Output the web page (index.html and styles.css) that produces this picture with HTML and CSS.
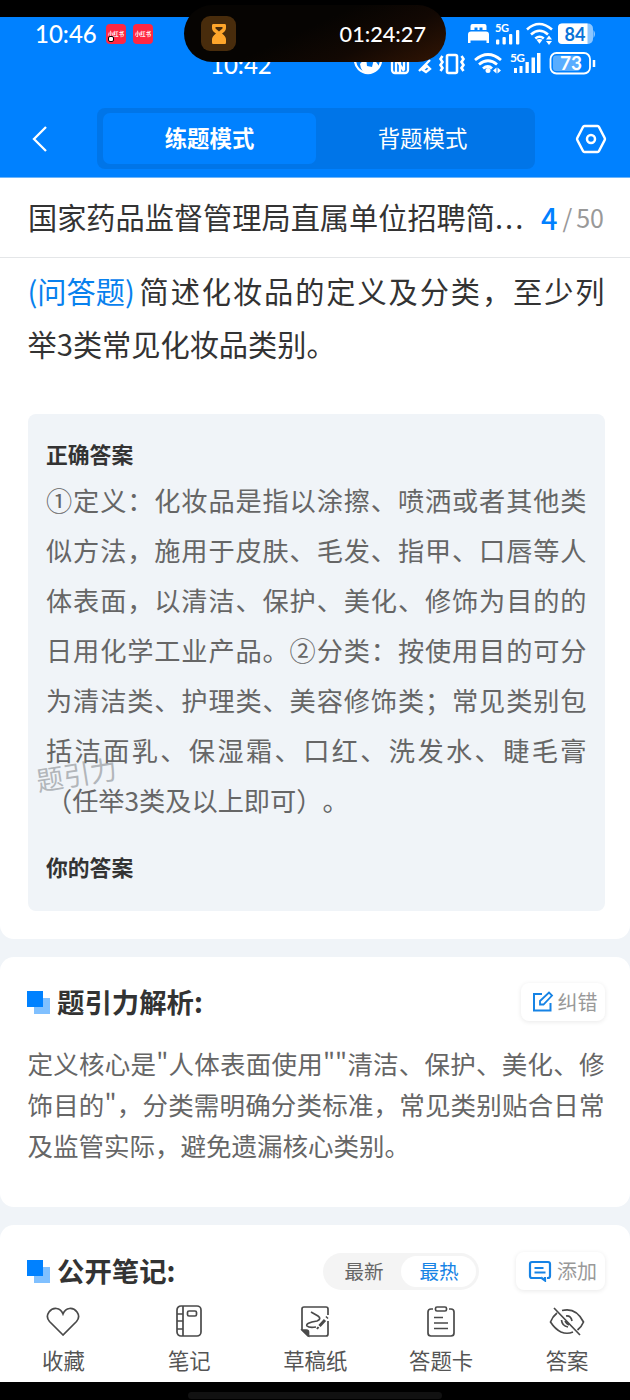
FILE: index.html
```html
<!DOCTYPE html>
<html lang="zh-CN">
<head>
<meta charset="utf-8">
<title>练题模式</title>
<link rel="stylesheet" href="styles.css">
</head>
<body>
<div class="screen">
  <div class="bezel"></div>
  <header class="header">
    <div class="status">
      <span class="clock">10:46</span>
      <span class="app app-first">小红书</span>
      <span class="app">小红书</span>
      <svg class="status-icons" width="130" height="26" viewBox="0 0 130 26" fill="#fff">
        <path d="M3.500 9V5q0-2 2-2h12q2 0 2 2v4h-4V6.500h-3V9h-2V6.500h-3V9zM1 22v-8.500q0-3 3-3h15q3 0 3 3V22h-2.500v-2.500h-16V22z"/>
        <rect x="29" y="18.500" width="3.300" height="5" rx="1"/><rect x="35.500" y="16" width="3.300" height="7.500" rx="1"/><rect x="42" y="13" width="3.300" height="10.500" rx="1"/><rect x="49" y="9" width="3.300" height="14.500" rx="1"/>
        <g fill="none" stroke="#fff" stroke-width="2.600"><path d="M60 8.500q12-11 25 0M64 13.500q8.500-7.500 17 0M68.300 17.500q4.300-3.500 8.500 0"/></g>
        <path d="M69.500 18.800q3-1.800 6 0l-3 4zM79 18.500l3-4 3 4zm0 1.500 3 4 3-4z"/>
        <rect x="91" y="2.500" width="35" height="20.500" rx="5" opacity=".55"/><path d="M95 2.500h25.500V23H95q-4 0-4-4V6.500q0-4 4-4z"/><path d="M126.500 9q3 4 0 8z" opacity=".6"/>
      </svg>
      <span class="sig">5G</span><span class="battery">84</span>
    </div>
    <div class="status-second">
      <span class="clock-second">10:42</span>
      <svg class="second-icons" width="244" height="26" viewBox="0 0 244 26" fill="none" stroke="#fff" stroke-width="2.300">
        <circle cx="14" cy="9" r="13"/><path d="M6 13l6-7 1 9 5 1 2-8 5 7q-4 7-11 7t-8-9z" fill="#fff" stroke="none"/>
        <rect x="38" y="4" width="16" height="18" rx="3"/><path d="M42 7v15M50 5v14M42 8l8 12M46 5v17"/>
        <path d="M65 20l11-11M72 21l4-3-3-3-4 4z"/>
        <rect x="93" y="4" width="10" height="18" rx="1.500" stroke-width="2.600"/><path d="M88.500 5l-2 3 2 3-2 3 2 3-2 3M107.500 5l2 3-2 3 2 3-2 3 2 3" stroke-width="2.600"/>
        <path d="M121 9q13-11 26 0M125 13.500q9-7.500 18 0M129 17.500q5-4 9 0" stroke-width="2.800"/><circle cx="134" cy="19.500" r="2.500" fill="#fff" stroke="none"/><path d="M139 19.500l3.500-3v6zM147 19.500l-3.500-3v6z" fill="#fff" stroke="none"/>
        <g fill="#fff" stroke="none"><rect x="160" y="17" width="3" height="5"/><rect x="165.500" y="15" width="3" height="7"/><rect x="171.500" y="11" width="3.300" height="11"/><rect x="177.500" y="6.500" width="3.500" height="15.500"/><rect x="183" y="2" width="3.500" height="20"/></g>
        <rect x="196.500" y="2" width="39.500" height="20.500" rx="6" stroke-width="1.800"/><rect x="199" y="4.500" width="27" height="15.500" rx="3" fill="#fff" stroke="none" opacity=".35"/><path d="M240 9v7" stroke-width="2.500"/>
      </svg>
      <span class="sig-second">5G</span><span class="battery-second">73</span>
    </div>
    <div class="island">
      <span class="timer-icon"><svg width="14" height="20" viewBox="0 0 14 20"><path d="M1 0h12q1 0 1 1.500V4q0 3-4 5.500 4 3 4 6v3q0 1.500-1 1.500H1q-1 0-1-1.500v-3q0-3 4-6Q0 7 0 4V1.500Q0 0 1 0z" fill="#ffa62b"/><path d="M3.500 3h7v1.500L7 7.500l-3.500-3z" fill="#482c0c"/></svg></span>
      <span>01:24:27</span>
    </div>
    <div class="nav">
      <svg class="back" width="18" height="28" viewBox="0 0 18 28"><path d="M15 2 3 14l12 12" fill="none" stroke="#fff" stroke-width="2.300"/></svg>
      <div class="tabs"><span class="tab active">练题模式</span><span class="tab">背题模式</span></div>
      <svg class="gear" width="32" height="30" viewBox="0 0 32 30" fill="none" stroke="#fff" stroke-width="2.500" stroke-linejoin="round"><path d="M9.500 2h13q1 0 1.500 1l5.700 11q.5 1 0 2L24 27q-.5 1-1.500 1h-13q-1 0-1.500-1L2.300 16q-.5-1 0-2L8 3q.5-1 1.500-1z"/><circle cx="16" cy="15" r="4"/></svg>
    </div>
  </header>

  <section class="title-row">
    <h1 class="title">国家药品监督管理局直属单位招聘简<span class="dots">...</span></h1>
    <span class="count"><b class="now">4</b><span class="slash">/</span>50</span>
  </section>

  <main class="question">
    <div class="question-line"><span class="kind">(问答题)</span><span class="fill">简述化妆品的定义及分类，至少列</span></div>
    <div class="question-line">举3类常见化妆品类别。</div>
    <div class="answer">
      <h2 class="answer-title">正确答案</h2>
      <div class="answer-text">
        <p class="full">①定义：化妆品是指以涂擦、喷洒或者其他类</p>
        <p class="full">似方法，施用于皮肤、毛发、指甲、口唇等人</p>
        <p class="full">体表面，以清洁、保护、美化、修饰为目的的</p>
        <p class="full">日用化学工业产品。②分类：按使用目的可分</p>
        <p class="full">为清洁类、护理类、美容修饰类；常见类别包</p>
        <p class="full">括洁面乳、保湿霜、口红、洗发水、睫毛膏</p>
        <p>（任举3类及以上即可）。</p>
      </div>
      <h2 class="answer-title yours">你的答案</h2>
      <span class="watermark">题引力</span>
    </div>
  </main>

  <section class="card analysis">
    <div class="card-head">
      <i class="mark"></i><h2 class="card-title">题引力解析:</h2>
      <span class="button fix"><svg width="22" height="22" viewBox="0 0 22 22" fill="none" stroke="#1683e5" stroke-width="2"><path d="M10 3H2v16.500h16.500V12"/><path d="M8 13.500V10l9-8.500 3 3-8.500 9z" stroke-width="1.800"/></svg>纠错</span>
    </div>
    <div class="analysis-text">
      <p class="full">定义核心是"人体表面使用""清洁、保护、美化、修</p>
      <p class="full">饰目的"，分类需明确分类标准，常见类别贴合日常</p>
      <p>及监管实际，避免遗漏核心类别。</p>
    </div>
  </section>

  <section class="card notes">
    <div class="card-head">
      <i class="mark"></i><h2 class="card-title">公开笔记:</h2>
      <div class="sort"><span class="sort-item">最新</span><span class="sort-item chosen">最热</span></div>
      <span class="button add"><svg width="24" height="22" viewBox="0 0 24 22" fill="none" stroke="#1683e5" stroke-width="2.200"><path d="M13 18H4q-2 0-2-2V4q0-2 2-2h16q2 0 2 2v12q0 2-2 2h-1M13 17.500l4 3V17"/><path d="M6.500 8h9M6.500 12.500h11"/></svg>添加</span>
    </div>
    <nav class="toolbar">
      <div class="tool"><svg width="36" height="36" viewBox="0 0 36 36"><path d="M18 31 4.500 17.500Q.5 13 4 8q3-4 7.500-3.500Q16 5 18 10q2-5 6.500-5.500Q29 4 32 8q3.500 5-.5 9.500z"/></svg>收藏</div>
      <div class="tool"><svg width="36" height="36" viewBox="0 0 36 36"><rect x="6" y="2" width="24" height="30" rx="4"/><path d="M12 2V32M6 10h6M6 17h6M6 25h6"/><rect x="16.500" y="7" width="9" height="5" rx="1.500"/></svg>笔记</div>
      <div class="tool"><svg width="36" height="36" viewBox="0 0 36 36"><path d="M31 11V5q0-2-2-2H7Q5 3 5 5v21l6 6h18q2 0 2-2V17"/><path d="M5.500 26h4q2 0 2 2v3.500z" fill="#4a4a4a"/><path d="M14 8l7 4q4 3-1 5-12 2-10 5 2 2 9 1"/><path d="M20 25l1.500-2" stroke-width="2"/><path d="M22.500 22l5.500-6M29.500 14l1-1" stroke-width="3"/></svg>草稿纸</div>
      <div class="tool"><svg width="36" height="36" viewBox="0 0 36 36"><path d="M10 5H8Q5 5 5 8v21q0 3 3 3h20q3 0 3-3V8q0-3-3-3h-2"/><rect x="12.500" y="3" width="11" height="4" rx="1.500"/><path d="M11 13.500h9M11 19h14M11 24.500h14"/></svg>答题卡</div>
      <div class="tool"><svg width="36" height="36" viewBox="0 0 36 36"><path d="M8 9Q3.500 12.500 1.500 18 6 25 12 28 18 30.500 24 28M13 6.500Q27 3 34.500 18q-2 5-6 8M5 4 31 31M17 12q5-.5 6 5M12.500 16q.5 6 6.500 7M16 17q1 2 4 4"/></svg>答案</div>
    </nav>
  </section>
  <footer class="home"><span class="home-bar"></span></footer>
</div>
</body>
</html>
```
FILE: styles.css
```css
* { box-sizing: border-box; }
body, h1, h2, p { margin: 0; }
body { background: #fff; font-family: "Noto Sans CJK SC", sans-serif; color: #333; text-spacing-trim: space-all; }
svg { display: block; flex: none; }
.screen { width: 630px; height: 1400px; overflow: hidden; background: #f0f4f8; display: flex; flex-direction: column; }
.bezel { height: 17px; background: #000; flex: none; }
.header { position: relative; flex: none; height: 161px; background: #0081ff; color: #fff; display: flex; flex-direction: column; border-bottom: 1px solid #6db5fa; }
.status { position: relative; height: 34px; padding-left: 35px; display: flex; align-items: center; gap: 7px; }
.clock { width: 64px; font: 500 24px/34px Lato, sans-serif; white-space: nowrap; }
.app { width: 20px; height: 20px; border-radius: 4px; background: #ff2742; font: 700 5.300px/20px "Noto Sans CJK SC", sans-serif; text-align: center; white-space: nowrap; position: relative; }
.app-first::after { content: ""; position: absolute; left: 2px; bottom: 2px; width: 4px; height: 4px; border-radius: 2px; background: #fff; border: 1px solid #000; }
.status-icons { margin-left: auto; margin-right: 33px; }
.sig { position: absolute; left: 495px; top: 5px; font: 700 11px/12px Lato, sans-serif; letter-spacing: -.5px; }
.battery { position: absolute; left: 560px; top: 6px; width: 30px; text-align: center; color: #0873d8; font: 700 18px/23px Lato, sans-serif; }
.status-second { position: relative; height: 30px; display: flex; }
.clock-second { margin-left: 210px; width: 65px; font: 500 24px/27px Lato, sans-serif; }
.second-icons { margin-left: 79px; }
.sig-second { position: absolute; left: 510px; top: 1px; font: 700 12px/12px Lato, sans-serif; letter-spacing: -.8px; }
.battery-second { position: absolute; left: 555px; top: 1px; width: 32px; text-align: center; font: 700 19px/22px Lato, sans-serif; }
.island { position: absolute; left: 184px; top: -12px; width: 262px; height: 57px; border-radius: 29px; background: linear-gradient(155deg, #060402 45%, #120803 70%, #321504 100%); display: flex; align-items: center; justify-content: space-between; padding: 0 20px 0 17px; font: 500 21.700px/34px Lato, sans-serif; }
.timer-icon { width: 35px; height: 35px; border-radius: 9px; background: #482c0c; display: flex; align-items: center; justify-content: center; }
.nav { display: flex; align-items: center; height: 61px; margin-top: 27px; padding: 0 23px 0 31px; }
.tabs { width: 438px; height: 61px; margin-left: 48px; border-radius: 8px; background: #0075e8; padding: 5px 6px; display: flex; }
.gear { margin-left: auto; }
.tab { width: 214px; height: 51px; border-radius: 7px; font-size: 22.400px; line-height: 48px; text-align: center; }
.active { background: #0081ff; font-weight: 700; }
.title-row { flex: none; height: 80px; background: #fff; border-bottom: 1px solid #e4e6e8; padding: 0 26px 0 28px; display: flex; justify-content: space-between; }
.title { font-size: 29.200px; font-weight: 400; line-height: 77px; white-space: nowrap; }
.dots { letter-spacing: 2px; }
.count { color: #999; font-size: 25px; line-height: 78px; display: flex; }
.now { color: #0081ff; font-size: 29px; font-weight: 500; }
.slash { margin: 0 4px 0 5px; }
.question { flex: none; height: 681px; background: #fff; border-radius: 0 0 14px 14px; padding: 7px 25.500px 0 27.500px; }
.question-line { height: 52.500px; line-height: 51px; font-size: 29.200px; display: flex; white-space: nowrap; }
.kind { color: #0881ee; width: 112px; }
.fill { flex: 1; text-align: justify; text-align-last: justify; }
.answer { position: relative; margin-top: 44px; height: 497px; border-radius: 8px; background: #f0f4f8; padding: 24px 18px 24px 18.500px; }
.answer-title { font-size: 21.800px; line-height: 32px; font-weight: 700; }
.answer-text { font-size: 26.200px; line-height: 50px; color: #666; padding-top: 5px; }
.answer-text p { height: 50px; white-space: nowrap; }
.full { text-align: justify; text-align-last: justify; }
.yours { margin-top: 26px; }
.watermark { position: absolute; left: 8px; top: 340px; font-size: 27px; line-height: 40px; color: #919599; opacity: .65; transform: rotate(-9deg); }
.card { flex: none; background: #fff; margin-top: 18px; }
.analysis { height: 250px; border-radius: 14px; padding: 25px 25.500px 0 27px; }
.card-head { display: flex; align-items: center; height: 40px; }
.mark { width: 23px; height: 23px; background: linear-gradient(#0081ff, #0081ff) 0 0 / 16px 16px no-repeat, linear-gradient(#80c0ff, #80c0ff) 100% 100% / 16px 16px no-repeat; }
.card-title { margin-left: 7px; font-size: 27.400px; line-height: 38px; font-weight: 700; position: relative; top: -1px; }
.button { margin-left: auto; width: 84px; height: 38px; border-radius: 8px; background: #fff; box-shadow: 0 1px 5px rgba(0, 0, 0, .09); display: flex; align-items: center; justify-content: center; gap: 4px; padding-left: 4px; font-size: 20px; color: #999; line-height: 36px; white-space: nowrap; }
.analysis-text { margin-top: 20px; padding-left: .5px; font-size: 25.500px; line-height: 41px; color: #666; }
.analysis-text p { white-space: nowrap; }
.notes { height: 157px; border-radius: 14px 14px 0 0; padding: 26px 0 0 27px; }
.sort { width: 156px; height: 37px; margin-left: 148px; border-radius: 19px; background: #f4f4f4; display: flex; padding: 3px; }
.sort-item { width: 75px; height: 31px; border-radius: 16px; text-align: center; font-size: 19.600px; line-height: 29px; color: #666; }
.chosen { background: #fff; color: #1683e5; }
.add { margin-left: auto; margin-right: 25px; width: 89px; gap: 5px; }
.toolbar { margin: 13px 0 0 -26.500px; display: flex; }
.tool { width: 126.200px; display: flex; flex-direction: column; align-items: center; font-size: 21.400px; line-height: 40px; color: #555; white-space: nowrap; }
.tool svg { fill: none; stroke: #4a4a4a; stroke-width: 1.700; }
.home { flex: none; height: 18px; background: #000; display: flex; justify-content: center; padding-top: 10px; }
.home-bar { width: 254px; height: 7px; border-radius: 4px; background: #111; }
```
